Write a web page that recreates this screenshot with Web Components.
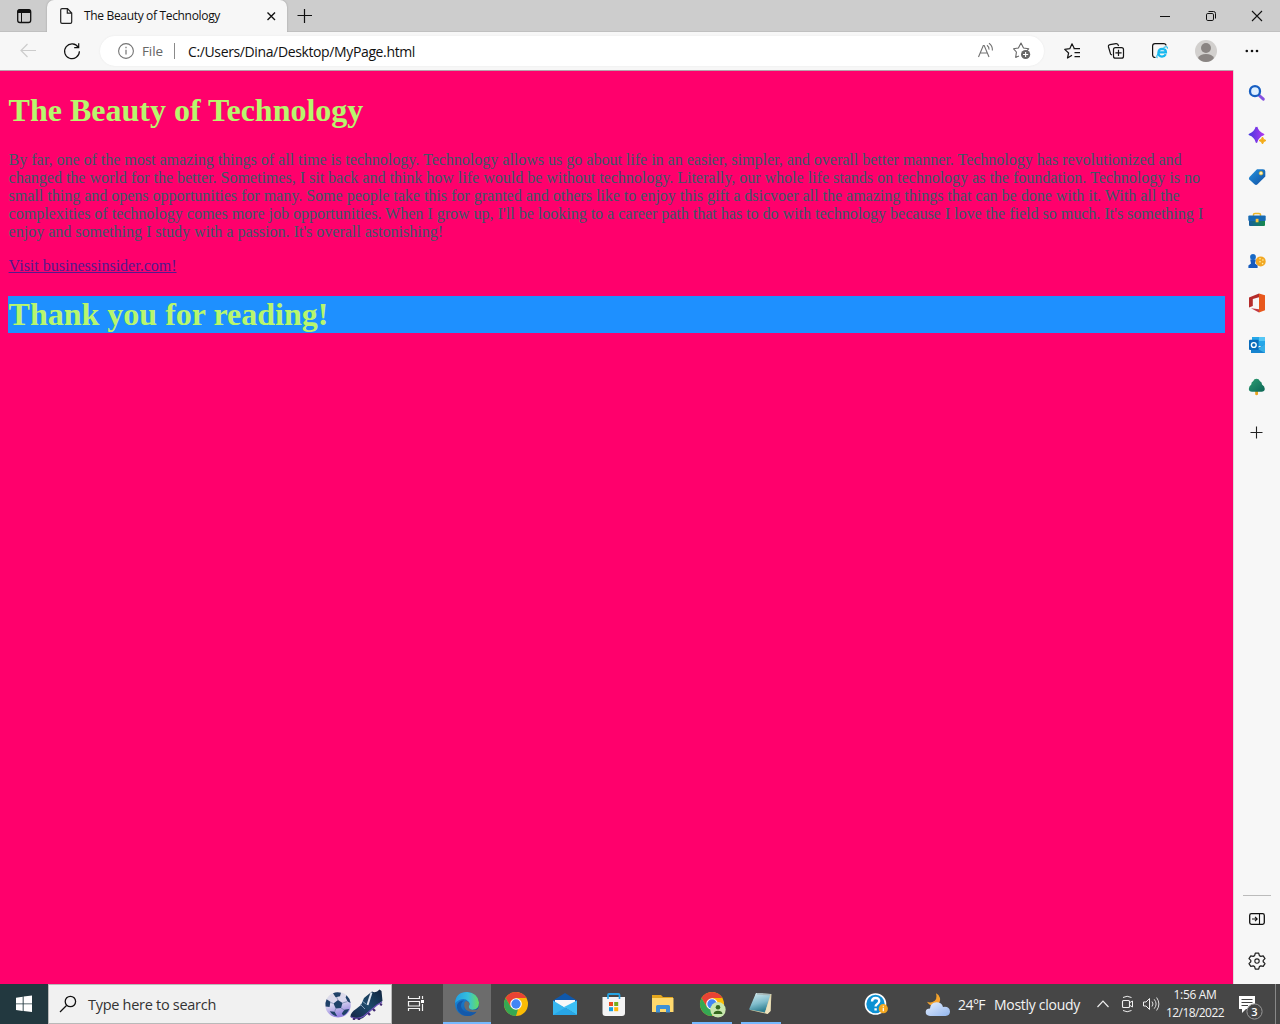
<!DOCTYPE html>
<html lang="en">
<head>
<meta charset="utf-8">
<title>The Beauty of Technology</title>
<style>
html,body{margin:0;height:100%;overflow:hidden}
body{font-family:"Open Sans","Noto Sans",sans-serif}
</style>
</head>
<body>
<desktop-screen></desktop-screen>
<script>
const icons = {
tabs:[16,8,16,16,`<rect x="17.7" y="9.7" width="13" height="12.8" rx="2.2" fill="none" stroke="#111" stroke-width="1.3"/><path d="M17.5 13V11.5Q17.5 9.3 20 9.3H28.5Q31 9.3 31 11.5V13Z" fill="#111"/><path d="M21.5 13V22" stroke="#111" stroke-width="1"/>`],
file:[59,7,14,18,`<path d="M60.7 10Q60.7 8.7 62 8.7H67.5L71.7 13V22Q71.7 23.4 70.4 23.4H62Q60.7 23.4 60.7 22ZM67.3 8.7V13.2H71.7" fill="none" stroke="#222" stroke-width="1.2"/>`],
tabx:[266,11,11,11,`<path d="M267.5 12.5L275 20M275 12.5L267.5 20" stroke="#111" stroke-width="1.35"/>`],
plus:[296,7,18,18,`<path d="M304.5 9V23M297.5 15.5H312" stroke="#111" stroke-width="1.2"/>`],
min:[1156,8,18,16,`<path d="M1160 16.5H1170" stroke="#111"/>`],
restore:[1202,8,18,16,`<rect x="1206.5" y="13.5" width="7" height="7" rx="1.3" fill="none" stroke="#111"/><path d="M1208.5 11.5H1213.5Q1215.5 11.5 1215.5 13.5V18.5" fill="none" stroke="#111"/>`],
close:[1248,8,18,16,`<path d="M1252 11L1262 21M1262 11L1252 21" stroke="#111" stroke-width="1.1"/>`],
back:[18,42,20,18,`<path d="M36 50.5H21M27.5 44L21 50.5L27.5 57" fill="none" stroke="#ccc" stroke-width="1.2"/>`],
reload:[62,41,20,20,`<path d="M78.3 47.4A7.4 7.4 0 1 0 79.4 51.3M78.7 43.2V47.6H74.2" fill="none" stroke="#111" stroke-width="1.2"/>`],
info:[117,42,18,18,`<circle cx="126" cy="51" r="7.4" fill="none" stroke="#747474" stroke-width="1.1"/><path d="M126 49.8V54.6M126 46.8V48.2" stroke="#747474" stroke-width="1.2"/>`],
read:[976,42,20,18,`<path d="M978.5 57L983.3 45.5H984.2L989 57M980.3 53H987.2M987 45.2Q989.2 46.8 989 49.6M989 43.2Q992.6 45.6 992.4 50.4" fill="none" stroke="#727272" stroke-width="1.1"/>`],
favadd:[1011,42,20,20,`<path d="M1019 57L1015.7 58.4L1016.4 53L1013.6 49.8L1018.4 49L1021 44L1023.5 49L1028.7 49.8L1026.8 51.8" fill="none" stroke="#666" stroke-width="1.1" stroke-linejoin="round"/><circle cx="1025.6" cy="55.5" r="4.6" fill="#666"/><path d="M1023 55.5H1028.2M1025.6 52.9V58.1" stroke="#fff" stroke-width="1.1"/>`],
fav:[1063,42,19,18,`<path d="M1072 55.2L1067.5 58L1068.6 53L1064.7 49.4L1069.8 48.7L1072 43.8L1074.2 48.2M1073.5 48.7H1080M1074.5 52.7H1080M1074.5 56.7H1080" fill="none" stroke="#151515" stroke-width="1.2" stroke-linejoin="round"/>`],
collect:[1107,42,19,18,`<path d="M1112 55L1110.6 54.2L1108.5 47Q1108 45 1110 44.6L1116 43.6Q1118 43.3 1118.6 46" fill="none" stroke="#151515" stroke-width="1.2"/><rect x="1113.5" y="47.6" width="10" height="10.6" rx="2" fill="#f7f7f7" stroke="#151515" stroke-width="1.2"/><path d="M1118.5 49.8V56M1115.4 52.9H1121.6" stroke="#151515" stroke-width="1.2"/>`],
ie:[1151,42,19,18,`<path d="M1155.5 57.5Q1152.6 57.5 1152.6 55V46Q1152.6 43.6 1155 43.6H1163.5Q1166 43.6 1166 45.5" fill="none" stroke="#111" stroke-width="1.2"/><path d="M1165.8 54.2Q1164.5 56.6 1162 56.6Q1158.4 56.3 1158.4 52.5Q1158.6 48.8 1162.2 48.8Q1166 49 1166 52.4H1159" fill="none" stroke="#16b8ef" stroke-width="2.2"/><path d="M1157.4 57.9Q1155.8 57 1158.4 53M1163.5 47.6Q1167.8 45.4 1167.4 48.6" fill="none" stroke="#16b8ef" stroke-width="1.1"/>`],
person:[1195,40,22,22,`<circle cx="1206" cy="51" r="11" fill="#d2d0ce"/><circle cx="1206" cy="48" r="5" fill="#8a8583"/><path d="M1198 58Q1200 54 1206 54T1214 58Q1211 62 1206 62T1198 58" fill="#8a8583"/>`],
dots:[1244,47,16,8,`<g fill="#111"><circle cx="1246.8" cy="51" r="1.3"/><circle cx="1252" cy="51" r="1.3"/><circle cx="1257" cy="51" r="1.3"/></g>`],
find:[1247,84,20,20,`<path d="M1259.3 95.5L1263.3 99.2" stroke="#8650df" stroke-width="3" stroke-linecap="round"/><circle cx="1255" cy="91.2" r="5" fill="#def0ff" stroke="#165ec2" stroke-width="2.3"/>`],
spark:[1247,125,20,20,`<path d="M1256.5 127Q1258 132.5 1263.5 134.5Q1258 136.5 1256.5 142Q1255 136.5 1249.5 134.5Q1255 132.5 1256.5 127" fill="url(#sp)" stroke="url(#sp)" stroke-width="1.8" stroke-linejoin="round"/><path d="M1262.5 137Q1263 140 1266 140.5Q1263 141 1262.5 144Q1262 141 1259 140.5Q1262 140 1262.5 137" fill="#f4ac18" stroke="#f4ac18" stroke-width="1"/><defs><linearGradient id="sp"><stop stop-color="#4938e0"/><stop offset="1" stop-color="#ad38ef"/></linearGradient></defs>`],
tag:[1247,168,20,20,`<path d="M1257 169.2H1263Q1265.3 169.2 1265.3 171.5V176.5L1257.5 184.3Q1256 185.5 1254.5 184.2L1249.3 179.6Q1248.3 178.3 1249.5 177Z" fill="url(#tg)"/><circle cx="1261" cy="173.2" r="1.8" fill="#fff2b9" stroke="#e8b928" stroke-width=".7"/><defs><linearGradient id="tg" y2="1"><stop stop-color="#2493dd"/><stop offset="1" stop-color="#1250a4"/></linearGradient></defs>`],
tools:[1247,210,20,20,`<path d="M1253.5 216V214.5Q1253.5 213.5 1255 213.5H1259Q1260.5 213.5 1260.5 214.5V216" fill="none" stroke="#efb626" stroke-width="1.5"/><rect x="1248.3" y="215.5" width="17.4" height="5.5" rx="1" fill="#176ab3"/><path d="M1249 221H1265V225Q1265 226 1264 226H1250Q1249 226 1249 225Z" fill="url(#tb)"/><rect x="1255.7" y="218.8" width="2.8" height="3.5" fill="#ffc83e"/><defs><linearGradient id="tb"><stop stop-color="#165d9d"/><stop offset="1" stop-color="#168a4b"/></linearGradient></defs>`],
games:[1247,252,20,20,`<circle cx="1260.7" cy="261.4" r="5" fill="#f2a824"/><g fill="#fff1a9"><circle cx="1260" cy="258.8" r=".8"/><circle cx="1262.9" cy="260" r=".8"/><circle cx="1260" cy="261.8" r=".8"/><circle cx="1262.6" cy="263.6" r=".8"/></g><circle cx="1253" cy="257" r="2.9" fill="#1769c6"/><path d="M1250.2 259.5H1255.8L1255 263.5L1257.6 265.6V268H1248.4V265.6L1251 263.5Z" fill="#175bbd"/>`],
office:[1247,293,20,20,`<path d="M1259 293.5L1265 295.3V310.3L1259 312.5Z" fill="#e8581c"/><path d="M1259 293.5L1249 297.6V307.5L1252.8 306V299L1259 297.3Z" fill="#b52c2b"/><path d="M1251 308.3L1259 309.2V312.5Z" fill="#c23a45"/>`],
outlook:[1247,335,20,20,`<rect x="1252" y="337" width="13" height="9" fill="#25a7e9"/><path d="M1259 337H1265V341H1259Z" fill="#55c7f5"/><path d="M1251 345L1258 348L1265 344.2V353H1251Z" fill="#1784cf"/><path d="M1258 349L1265 344V353Z" fill="#36afe8"/><rect x="1249" y="339.8" width="9.6" height="10.2" rx="1" fill="#096bbb"/><circle cx="1253.8" cy="345" r="2.4" fill="none" stroke="#fff" stroke-width="1.4"/>`],
tree:[1247,377,20,20,`<path d="M1255.2 390H1258V394.5Q1256.6 396 1255.2 394.5Z" fill="#eca51d"/><path d="M1253.3 381Q1254 378.7 1256.5 378.7T1259.8 381Q1262.2 382 1262 384.5Q1264.8 386 1264.8 389Q1264.5 391.8 1261.5 391.8H1252Q1249 391.8 1248.8 389Q1248.8 386 1251.3 384.5Q1251 382 1253.3 381" fill="url(#tr)"/><defs><linearGradient id="tr" x2="1" y2="1"><stop stop-color="#2e9f74"/><stop offset="1" stop-color="#0c6555"/></linearGradient></defs>`],
sideplus:[1247,423,20,20,`<path d="M1256.5 426.5V438.5M1250.5 432.5H1262.5" stroke="#222" stroke-width="1.1"/>`],
panel:[1247,909,20,20,`<rect x="1249.7" y="913.7" width="14.6" height="10.6" rx="1.7" fill="none" stroke="#111" stroke-width="1.3"/><path d="M1259.5 914V924M1252 919H1257M1255 916.8L1257.2 919L1255 921.2" fill="none" stroke="#111" stroke-width="1.1"/>`],
gear:[1247,951,20,20,`<path d="M1255.3 953.2H1258.7L1259.4 955.6L1260.8 956.4L1263.2 955.8L1265 958.6L1263.2 960.4V961.8L1265 963.6L1263.2 966.4L1260.8 965.8L1259.4 966.6L1258.7 969H1255.3L1254.6 966.6L1253.2 965.8L1250.8 966.4L1249 963.6L1250.8 961.8V960.4L1249 958.6L1250.8 955.8L1253.2 956.4L1254.6 955.6Z" fill="none" stroke="#222" stroke-width="1.25" stroke-linejoin="round"/><circle cx="1257" cy="961.1" r="2.2" fill="none" stroke="#222" stroke-width="1.1"/>`],
win:[15,995,18,18,`<path d="M16 997.8L22.7 996.8V1003.4H16ZM23.6 996.6L32 995.6V1003.4H23.6ZM16 1004.3H22.7V1010.9L16 1010ZM23.6 1004.3H32V1012.1L23.6 1011Z" fill="#fff"/>`],
lens:[58,994,20,20,`<circle cx="70.4" cy="1001.5" r="5.2" fill="none" stroke="#111" stroke-width="1.3"/><path d="M66.5 1005.5L60 1012" stroke="#111" stroke-width="1.3"/>`],
sport:[324,986,62,36,`<defs><linearGradient id="bl" x2=".3" y2="1"><stop stop-color="#dcdce4"/><stop offset=".5" stop-color="#dcdaf0"/><stop offset="1" stop-color="#9583e0"/></linearGradient><linearGradient id="sh" x1="1" y1="0" x2="0" y2="1"><stop stop-color="#11243e"/><stop offset=".5" stop-color="#1d4a6b"/><stop offset="1" stop-color="#152445"/></linearGradient></defs><circle cx="338" cy="1004.7" r="12.8" fill="url(#bl)"/><g fill="#1f4268"><path d="M338 1000L342.5 1003L341 1008L335.8 1008.4L333.5 1003.5Z"/><path d="M333 993.2Q337 991.6 341 992.8L340 996.2L335.6 997.3ZM346.5 995.3Q350 998.6 350.6 1003L347.6 1001.6L345.6 997.6ZM326.6 999.3L330.4 1001.8L329.6 1007L325.6 1006.6Q325 1002.6 326.6 999.3ZM329.8 1011.2L334.6 1011.7L337.2 1016.2Q332.6 1015.6 329.8 1011.2ZM344.4 1009.7L349.2 1009Q347.2 1013.8 343.2 1015.6L341.8 1013.4Z"/></g><path d="M338 1000L336.5 997M342.5 1003L347 1001.7M341 1008L344.4 1010M335.8 1008.4L334.6 1012M333.5 1003.5L330.4 1002.4" stroke="#7082a6" stroke-width=".7"/><path d="M372 991.5Q376 993.5 379.5 989.6L381.5 991L382.5 1001L376 1006L363 1018Q357 1021 350.5 1017Q350 1013 356 1009L361 1005L364 998Z" fill="url(#sh)"/><path d="M371.5 992.5L367.5 1005" stroke="#dce6f1" stroke-width="2" fill="none"/><path d="M360 1004L365 1009M362 1001L366 1004" stroke="#9fb6cf" stroke-width=".8"/><path d="M351 1017Q358 1020 364 1016L377 1005L382 1002" fill="none" stroke="#7053bc" stroke-width="1.2"/><path d="M354 1018V1020M359 1018V1020M368 1013L370 1015M373 1009L375 1011M380 1004L382 1005" stroke="#432b72" stroke-width="2.4"/>`],
task:[406,994,20,20,`<path d="M408.5 996V998.5H419.5V996M408.5 1011V1008.5H419.5V1011M408.5 1001.5H419.5V1006H408.5ZM422.5 996V999M422.5 1004V1011" fill="none" stroke="#f2f2f2" stroke-width="1.2"/><rect x="421" y="1000" width="3" height="3" fill="#fff"/>`],
edge:[454,991,26,26,`<defs><linearGradient id="e1" x1="0" x2="1"><stop stop-color="#219ee4"/><stop offset=".55" stop-color="#35c0db"/><stop offset="1" stop-color="#68dd5b"/></linearGradient><linearGradient id="e2" y2="1"><stop stop-color="#1b90df"/><stop offset="1" stop-color="#114c9e"/></linearGradient></defs><circle cx="467" cy="1004" r="12" fill="url(#e2)"/><path d="M455 1003Q456 992 467 992Q478 993 479 1002.5Q479 1010 472 1009.7Q467.5 1009 468.5 1006.5Q470.5 1003.8 468.5 1001.5Q463 996 455 1003" fill="url(#e1)"/><path d="M464 1000.5Q460 1003 461.5 1008Q465 1014.5 475 1011.8Q477 1011 476 1012.5Q472 1017 464.5 1015.5Q456 1012 457 1005Q459 1000 464 1000.5" fill="#1459aa"/><path d="M466 1001Q470.5 1002 469.3 1005Q467.7 1007.8 471 1009.7Q475 1011 479.5 1008.2L477.8 1011.6Q470 1013.2 466.2 1010Q463 1006 464.8 1002Z" fill="#6c6c6c"/>`],
chrome:[503,991,26,26,`<circle cx="516" cy="1004" r="12" fill="#fbbc05"/><path d="M505.6 998A12 12 0 0 1 526.4 998H516L510.8 1007Z" fill="#e94335"/><path d="M505.6 998L510.8 1007L518 1009.2L516 1016A12 12 0 0 1 505.6 998" fill="#35a853"/><circle cx="516" cy="1004" r="5.8" fill="#fff"/><circle cx="516" cy="1004" r="4.7" fill="#4285f4"/>`],
mail:[552,991,26,26,`<path d="M553 1000.5L565 993L577 1000.5V1005H553Z" fill="#0f58ab"/><path d="M555 1000H575V1003L565 1008L555 1003Z" fill="#f8f8f8"/><path d="M553 1000.5L577 1015H553Z" fill="#36b6ef"/><path d="M577 1000.5V1015L564 1007Z" fill="#3cc0f5"/><path d="M553 1015L577 1015L565 1007.7Z" fill="#27a6e7"/>`],
store:[601,991,26,26,`<path d="M608 998V995Q608 994 609 994H618.5Q619.5 994 619.5 995V998" fill="none" stroke="#25a4e4" stroke-width="1.8"/><path d="M602.5 997H625V1013Q625 1016 622 1016H605.5Q602.5 1016 602.5 1013Z" fill="#f4f4f4"/><path d="M608 997V999M619.5 997V999" stroke="#25a4e4" stroke-width="1.6"/><path d="M609 1002H613V1006H609Z" fill="#ec4b20"/><path d="M614.2 1002H618.2V1006H614.2Z" fill="#75ad1d"/><path d="M609 1007.2H613V1011.2H609Z" fill="#139ee1"/><path d="M614.2 1007.2H618.2V1011.2H614.2Z" fill="#ffb70a"/>`],
folder:[650,991,26,26,`<path d="M652 995H661L663 997H673V1011H652Z" fill="#e4a61d"/><path d="M652 998H673.5V1012H652Z" fill="#ffd96d"/><path d="M656 1012.5V1006.5Q656 1005 657.5 1005H668.5Q670 1005 670 1006.5V1012.5H666V1009H660V1012.5Z" fill="#3e91d6"/>`],
chrome2:[699,991,28,27,`<g transform="translate(196 0)"><circle cx="516" cy="1004" r="12" fill="#fbbc05"/><path d="M505.6 998A12 12 0 0 1 526.4 998H516L510.8 1007Z" fill="#e94335"/><path d="M505.6 998L510.8 1007L518 1009.2L516 1016A12 12 0 0 1 505.6 998" fill="#35a853"/><circle cx="516" cy="1004" r="5.8" fill="#fff"/><circle cx="516" cy="1004" r="4.7" fill="#4285f4"/></g><circle cx="718" cy="1009.7" r="7.7" fill="#c8e7ae"/><circle cx="718" cy="1007.3" r="2.3" fill="#34681e"/><path d="M713.5 1014Q714 1010.8 718 1010.8T722.5 1014Z" fill="#34681e"/>`],
note:[748,991,26,26,`<path d="M756 993.5L771.5 994L770.5 1011L767.5 1014L750 1010Z" fill="#d9cfa4"/><path d="M756 993L770.5 994L765 1012.5L749 1009.5Z" fill="url(#np)"/><path d="M757 993.8L770 994.7" stroke="#a7b8b8" stroke-width="1.5"/><path d="M765 1012.5L770.5 996V1011L767.5 1014Z" fill="#eee3bd"/><defs><linearGradient id="np" x2=".3" y2="1"><stop stop-color="#d9eef2"/><stop offset=".6" stop-color="#7fbccb"/><stop offset="1" stop-color="#2f7f92"/></linearGradient></defs>`],
help:[864,992,25,24,`<circle cx="875.5" cy="1004" r="10" fill="#0d91d3" stroke="#fff" stroke-width="1.6"/><path d="M872 1001.5Q872 998 875.7 998T879.2 1001.2Q879 1003 877 1004.2Q875.6 1005 875.6 1006.5M875.6 1008.3V1010.6" fill="none" stroke="#fff" stroke-width="2.4"/><circle cx="883.3" cy="1008.7" r="4.6" fill="#f3a820"/><path d="M883.3 1007.8V1011.2M883.3 1005.8V1006.8" stroke="#fff" stroke-width="1.2"/>`],
weather:[924,991,28,25,`<path d="M936 992.3Q938 999 932.5 1001Q930 1002 927 1000.8Q930 1006 936 1004.5Q941 1002 940 997Q939 993.5 936 992.3" fill="#f5a32b"/><path d="M930 1015Q925.5 1014.5 925.7 1010.7Q926 1007.5 930 1007.5Q930.5 1001.5 936.5 1001.3Q942 1001.5 943 1006Q949.5 1005 950 1010.5Q950 1014.5 945.5 1015Z" fill="url(#cl)"/><defs><linearGradient id="cl" y2="1"><stop stop-color="#e6efff"/><stop offset="1" stop-color="#92b6ed"/></linearGradient></defs>`],
caret:[1095,996,16,16,`<path d="M1097.5 1007L1103 1001.2L1108.5 1007" fill="none" stroke="#eee" stroke-width="1.2"/>`],
meet:[1119,994,16,20,`<path d="M1123 997.5Q1127 995 1131.5 997.5M1123 1010.5Q1127 1013 1131.5 1010.5" fill="none" stroke="#eee"/><rect x="1122.5" y="1000.5" width="7" height="7" rx="1" fill="none" stroke="#eee" stroke-width="1.1"/><path d="M1130 1002.5L1132.5 1001V1007L1130 1005.5" fill="none" stroke="#eee"/>`],
sound:[1141,995,20,18,`<path d="M1143.5 1002H1146L1149.5 998.5V1009.5L1146 1006H1143.5Z" fill="none" stroke="#eee"/><path d="M1152 1001.5Q1154 1004 1152 1006.5M1154.2 999.3Q1158 1004 1154.2 1008.7M1156.6 997.5Q1161.2 1004 1156.6 1010.5" fill="none" stroke="#ddd"/>`],
action:[1238,994,26,28,`<path d="M1239 996H1255V1009H1246L1242 1013V1009H1239Z" fill="#fff"/><path d="M1241.5 999.5H1252.5M1241.5 1002.5H1252.5M1241.5 1005.5H1248" stroke="#444"/><circle cx="1254.5" cy="1011.5" r="7.6" fill="#454545" stroke="#999"/><text x="1254.5" y="1015.5" text-anchor="middle" font-family="Open Sans" font-weight="600" font-size="11" fill="#fff">3</text>`]
};
const define=(name,html,setup)=>customElements.define(name,class extends HTMLElement{
connectedCallback(){if(this.shadowRoot)return;const r=this.attachShadow({mode:'open'});r.innerHTML=typeof html==='function'?html(this):html;if(setup)setup(this,r)}});
define('ui-icon',el=>{const [x,y,w,h,b]=icons[el.getAttribute('name')];return `<style>:host{display:block;flex:none;width:${w}px;height:${h}px}svg{display:block}</style><svg width="${w}" height="${h}" viewBox="${x} ${y} ${w} ${h}">${b}</svg>`});
// A single line of interface text whose tracking is tuned to a given width.
define('ui-label','<style>:host{display:block;flex:none;white-space:nowrap}span{display:inline-block}</style><span><slot></slot></span>',(el,r)=>{
const w=+el.getAttribute('width'),s=r.querySelector('span');el.style.width=w+'px';
s.style.letterSpacing=((w-s.getBoundingClientRect().width)/el.textContent.length)+'px'});

define('tab-strip',`<style>
:host{display:flex;height:32px;background:#cdcdcd;box-shadow:inset 0 -1px #c0c0c0;align-items:center}
.tab{display:flex;align-items:center;width:240px;height:32px;background:#f7f7f7;border-radius:7px 7px 0 0;margin-left:15px;box-shadow:0 0 2px #999;clip-path:inset(0 -3px 0 -3px)}
.t{font-size:12px;line-height:18px;color:#111;margin-left:11px}
.x{margin-left:46px}.plus{margin-left:9px}.c{display:flex;gap:28px;margin-left:auto;margin-right:14px}
</style><ui-icon name="tabs" style="margin-left:16px"></ui-icon><div class="tab"><ui-icon name="file" style="margin-left:12px"></ui-icon><ui-label class="t" width="136">The Beauty of Technology</ui-label><ui-icon class="x" name="tabx"></ui-icon></div><ui-icon class="plus" name="plus"></ui-icon><div class="c"><ui-icon name="min"></ui-icon><ui-icon name="restore"></ui-icon><ui-icon name="close"></ui-icon></div>`);
define('address-bar',`<style>
:host{display:flex;height:38px;background:#f7f7f7;align-items:center}
.field{display:flex;align-items:center;box-sizing:border-box;width:944px;height:30px;border-radius:15px;background:#fff;margin-left:18px;padding-left:17px;font-size:14px;box-shadow:0 0 2px #e7e7e7}
i{width:1px;height:16px;background:#8a8a8a;margin:0 13px 0 11px}
</style><ui-icon name="back" style="margin-left:18px"></ui-icon><ui-icon name="reload" style="margin-left:24px"></ui-icon><div class="field"><ui-icon name="info"></ui-icon><ui-label width="21" style="margin-left:7px;color:#666;font-size:13.5px">File</ui-label><i></i><ui-label width="227" style="color:#111">C:/Users/Dina/Desktop/MyPage.html</ui-label><ui-icon name="read" style="margin-left:561px"></ui-icon><ui-icon name="favadd" style="margin-left:15px"></ui-icon></div><ui-icon name="fav" style="margin-left:19px"></ui-icon><ui-icon name="collect" style="margin-left:25px"></ui-icon><ui-icon name="ie" style="margin-left:25px"></ui-icon><ui-icon name="person" style="margin-left:25px"></ui-icon><ui-icon name="dots" style="margin-left:27px"></ui-icon>`);
define('web-document',`<style>
:host{display:flow-root;box-sizing:border-box;width:1233px;padding:0 8px;background:#ff006c;border-top:1px solid #b7a1aa;font:16px/18px "Liberation Serif",serif;color:#3a5a66}
h1{font-size:32px;line-height:37px;margin:21.44px 0;padding-left:.6px;color:#b8f66d}p{margin:16px 0;padding-left:.6px;white-space:nowrap}a{color:#551a8b;text-decoration:underline}.thanks{background:#1e90ff}
</style><h1>The Beauty of Technology</h1><p>By far, one of the most amazing things of all time is technology. Technology allows us go about life in an easier, simpler, and overall better manner. Technology has revolutionized and<br>changed the world for the better. Sometimes, I sit back and think how life would be without technology. Literally, our whole life stands on technology as the foundation. Technology is no<br>small thing and opens opportunities for many. Some people take this for granted and others like to enjoy this gift a dsicvoer all the amazing things that can be done with it. With all the<br>complexities of technology comes more job opportunities. When I grow up, I'll be looking to a career path that has to do with technology because I love the field so much. It's something I<br>enjoy and something I study with a passion. It's overall astonishing!</p><p><a>Visit businessinsider.com!</a></p><h1 class="thanks">Thank you for reading!</h1>`);
define('side-bar',`<style>
:host{display:flex;flex-direction:column;box-sizing:border-box;width:47px;background:#f7f7f7;border-left:1px solid #ddd;padding:14px 0 13px 13px;gap:22px}
hr{width:28px;height:1px;background:#bbb;border:0;margin:auto 0 -9px -4px;flex:none}
</style>`+['find','spark','tag','tools','games','office','outlook','tree'].map((n,i)=>`<ui-icon name="${n}" style="margin-top:${[0,-1,1,0,0,-1,0,0][i]}px"></ui-icon>`).join('')+`<ui-icon name="sideplus" style="margin-top:4px"></ui-icon><hr><ui-icon name="panel"></ui-icon><ui-icon name="gear"></ui-icon>`);
define('app-button',el=>`<style>:host{display:flex;flex:none;box-sizing:border-box;width:48px;height:40px;align-items:center;justify-content:center;background:linear-gradient(#76b9ff,#76b9ff) center bottom/${el.getAttribute('line')||0}px 2px no-repeat}:host([active]){background-color:#6c6c6c}</style><slot></slot>`);
define('task-bar',`<style>
:host{display:flex;height:40px;background:#464646;align-items:center;color:#f4f4f4}
.start{background-color:#22383f}.search{display:flex;align-items:center;box-sizing:border-box;width:344px;height:40px;background:#f1f1f1;border:1px solid #b9b9b9;padding-left:9px;color:#333}
.apps{display:flex;gap:1px;margin-left:3px}.clock{display:flex;flex-direction:column;align-items:center;width:60px;margin-left:4px;font-size:12px;line-height:18px}.w{font-size:14px}
.end{width:1px;height:40px;background:#888;margin-left:11px}
</style><app-button class="start"><ui-icon name="win"></ui-icon></app-button><div class="search"><ui-icon name="lens"></ui-icon><ui-label width="128" style="font-size:14.5px;margin-left:10px">Type here to search</ui-label><ui-icon name="sport" style="margin-left:108px"></ui-icon></div><app-button style="margin-left:0"><ui-icon name="task"></ui-icon></app-button><div class="apps"><app-button active line="48"><ui-icon name="edge"></ui-icon></app-button>`+['chrome','mail','store','folder'].map(n=>`<app-button><ui-icon name="${n}"></ui-icon></app-button>`).join('')+`<app-button line="40"><ui-icon name="chrome2" style="margin-left:2px"></ui-icon></app-button><app-button line="40"><ui-icon name="note"></ui-icon></app-button></div><ui-icon name="help" style="margin-left:79px"></ui-icon><ui-icon name="weather" style="margin-left:35px"></ui-icon><ui-label class="w" width="27" style="margin-left:6px">24°F</ui-label><ui-label class="w" width="86" style="margin-left:9px">Mostly cloudy</ui-label><ui-icon name="caret" style="margin-left:15px"></ui-icon><ui-icon name="meet" style="margin-left:8px"></ui-icon><ui-icon name="sound" style="margin-left:6px"></ui-icon><div class="clock"><ui-label width="43">1:56 AM</ui-label><ui-label width="58">12/18/2022</ui-label></div><ui-icon name="action" style="margin-left:13px;margin-top:8px"></ui-icon><div class="end"></div>`);
define('desktop-screen',`<style>:host{display:flex;flex-direction:column;width:1280px;height:1024px;overflow:hidden}main{display:flex;flex:1;min-height:0}</style><tab-strip></tab-strip><address-bar></address-bar><main><web-document></web-document><side-bar></side-bar></main><task-bar></task-bar>`);
</script>
</body>
</html>
